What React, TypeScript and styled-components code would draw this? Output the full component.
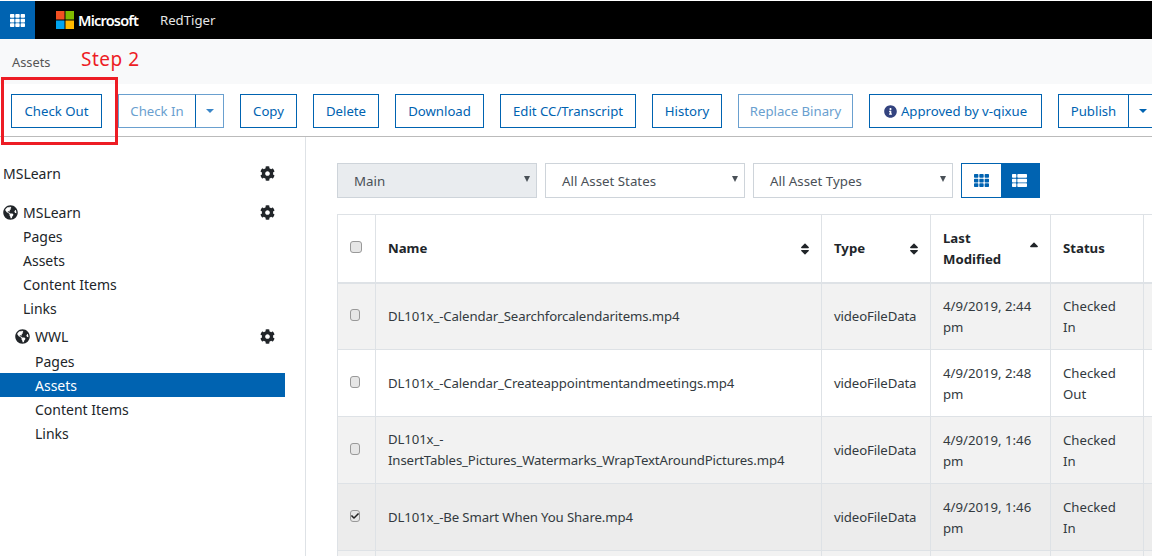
import * as React from "react";
import styled, { createGlobalStyle } from "styled-components";
import { FaCheck, FaCog, FaGlobeAmericas, FaInfoCircle, FaSort, FaSortUp, FaTh, FaThList } from "react-icons/fa";

const Global = createGlobalStyle`
  html, body {
    margin: 0;
    width: 1152px;
    height: 556px;
    overflow: hidden;
    background: #fff;
  }
  body {
    font-family: "Noto Sans", "Open Sans", sans-serif;
    font-size: 14px;
    color: #212529;
  }
  * { box-sizing: border-box; }
`;

const blue = "#0063b1";

const Page = styled.div`
  position: relative;
  width: 1152px;
  height: 556px;
  overflow: hidden;
  display: flex;
  flex-direction: column;
`;

const TopBar = styled.div`
  flex: 0 0 38px;
  margin-top: 1px;
  background: #000;
  display: flex;
  align-items: center;
`;

const AppTile = styled.div`
  width: 35px;
  height: 100%;
  background: ${blue};
  color: #fff;
  display: flex;
  align-items: center;
  justify-content: center;
  font-size: 15px;
`;

const Logo = styled.svg`
  margin-left: 21px;
  width: 18px;
  height: 18px;
`;

const Brand = styled.span`
  margin-left: 4px;
  color: #fff;
  font-size: 14.5px;
  font-weight: 600;
  letter-spacing: -0.8px;
`;

const Product = styled.span`
  margin-left: 22px;
  color: #e6e6e6;
  font-size: 13.2px;
`;

const Crumbs = styled.div`
  flex: 0 0 45px;
  background: #f8f9fa;
  padding: 14px 0 0 12px;
  font-size: 12.8px;
  color: #555;
`;

const Toolbar = styled.div`
  flex: 0 0 53px;
  border-bottom: 1px solid #bbb;
  padding: 10px 0 0 11px;
  display: flex;
  gap: 16px;
`;

const Btn = styled.div<{ $w: number; $off?: boolean }>`
  flex: 0 0 ${(p) => p.$w}px;
  height: 34px;
  border: 1px solid ${(p) => (p.$off ? "#6aa0cf" : blue)};
  color: ${(p) => (p.$off ? "#6aa0cf" : blue)};
  display: flex;
  align-items: center;
  justify-content: center;
  gap: 4px;
  font-size: 13.2px;
  white-space: nowrap;
`;

const InfoIcon = styled(FaInfoCircle)`
  color: #33437f;
  font-size: 13px;
`;

const Split = styled.div`
  display: flex;
`;

const Caret = styled.div<{ $w: number; $off?: boolean }>`
  flex: 0 0 ${(p) => p.$w}px;
  width: ${(p) => p.$w}px;
  height: 34px;
  border: 1px solid ${(p) => (p.$off ? "#6aa0cf" : blue)};
  border-left-color: ${blue};
  margin-left: -1px;
  display: flex;
  align-items: center;
  justify-content: center;
  &::after {
    content: "";
    border-left: 4px solid transparent;
    border-right: 4px solid transparent;
    border-top: 4px solid ${(p) => (p.$off ? "#3a86c8" : blue)};
    margin-top: -1px;
  }
`;

const Body = styled.div`
  flex: 1;
  display: flex;
  min-height: 0;
`;

const Sidebar = styled.div`
  flex: 0 0 306px;
  border-right: 1px solid #dee2e6;
  padding: 24px 20px 0 0;
`;

const Row = styled.div<{ $indent: number; $h?: number; $active?: boolean }>`
  height: ${(p) => p.$h ?? 24}px;
  padding-left: ${(p) => p.$indent}px;
  display: flex;
  align-items: center;
  gap: 5px;
  font-size: 14px;
  background: ${(p) => (p.$active ? blue : "transparent")};
  color: ${(p) => (p.$active ? "#fff" : "#212529")};
`;

const SubHead = styled(Row)`
  padding-top: 3px;
`;

const Gear = styled(FaCog)`
  margin-left: auto;
  margin-right: 10px;
  font-size: 15px;
`;

const Globe = styled(FaGlobeAmericas)`
  font-size: 15px;
`;

const Main = styled.div`
  flex: 1;
  padding: 26px 0 0 31px;
  min-width: 0;
`;

const Filters = styled.div`
  display: flex;
  gap: 8px;
  height: 35px;
`;

const Select = styled.div<{ $off?: boolean }>`
  width: 200px;
  border: 1px solid #ced4da;
  background: ${(p) => (p.$off ? "#e9ecef" : "#fff")};
  color: #495057;
  font-size: 13.3px;
  padding: 0 6px 0 16px;
  display: flex;
  align-items: center;
  justify-content: space-between;
  &::after {
    content: "";
    border-left: 3.5px solid transparent;
    border-right: 3.5px solid transparent;
    border-top: 6px solid #495057;
    margin-top: -4px;
  }
`;

const Toggle = styled.div`
  display: flex;
  width: 79px;
  border: 1px solid ${blue};
`;

const ToggleCell = styled.div<{ $on?: boolean }>`
  flex: 1;
  background: ${(p) => (p.$on ? blue : "#fff")};
  color: ${(p) => (p.$on ? "#fff" : blue)};
  display: flex;
  align-items: center;
  justify-content: center;
  font-size: 15px;
`;

const Table = styled.table`
  margin-top: 16px;
  width: 860px;
  table-layout: fixed;
  border-collapse: collapse;
`;

const Th = styled.th`
  height: 68px;
  border: 1px solid #dee2e6;
  border-bottom-width: 2px;
  padding: 1px 10px 0 12px;
  text-align: left;
  font-size: 13.2px;
  font-weight: 700;
  line-height: 21px;
`;

const ThInner = styled.div`
  display: flex;
  align-items: center;
  justify-content: space-between;
`;

const SortIcon = styled.span<{ $up?: boolean }>`
  font-size: 14px;
  display: flex;
  margin-right: -1px;
  margin-top: ${(p) => (p.$up ? "-2px" : "0")};
`;

const Tr = styled.tr<{ $bg: string }>`
  background: ${(p) => p.$bg};
`;

const Td = styled.td`
  height: 67px;
  border: 1px solid #dee2e6;
  padding: 2px 12px 0;
  font-size: 13.2px;
  line-height: 21px;
  color: #333a40;
`;

const NameCell = styled(Td)`
  padding-top: 0;
  letter-spacing: -0.12px;
`;

const CheckCell = styled.div`
  display: flex;
  justify-content: center;
  margin-top: -4px;
  padding-right: 3px;
`;

const Box = styled.span`
  width: 12px;
  height: 12px;
  border: 1px solid #999;
  border-radius: 3px;
  background: #e6e6e6;
  color: #222;
  font-size: 8px;
  display: flex;
  align-items: center;
  justify-content: center;
`;

const Annotation = styled.div`
  position: absolute;
  left: 1px;
  top: 77px;
  width: 117px;
  height: 68px;
  border: 3px solid #ed1c24;
`;

const StepLabel = styled.div`
  position: absolute;
  left: 81px;
  top: 46px;
  color: #ed1c24;
  font-size: 19px;
  letter-spacing: 0.5px;
`;

const rows = [
  { name: "DL101x_-Calendar_Searchforcalendaritems.mp4", date: "4/9/2019, 2:44 pm", status: "Checked In", bg: "#f2f2f2" },
  { name: "DL101x_-Calendar_Createappointmentandmeetings.mp4", date: "4/9/2019, 2:48 pm", status: "Checked Out", bg: "#fff" },
  { name: "DL101x_-InsertTables_Pictures_Watermarks_WrapTextAroundPictures.mp4", date: "4/9/2019, 1:46 pm", status: "Checked In", bg: "#f2f2f2" },
  { name: "DL101x_-Be Smart When You Share.mp4", date: "4/9/2019, 1:46 pm", status: "Checked In", bg: "#ececec", checked: true },
  { name: "", date: "", status: "", bg: "#f2f2f2" },
];

export default function App() {
  return (
    <Page>
      <Global />
      <TopBar>
        <AppTile><FaTh /></AppTile>
        <Logo viewBox="0 0 18 18">
          <rect width="8.5" height="8.5" fill="#f25022" />
          <rect x="9.5" width="8.5" height="8.5" fill="#7fba00" />
          <rect y="9.5" width="8.5" height="8.5" fill="#00a4ef" />
          <rect x="9.5" y="9.5" width="8.5" height="8.5" fill="#ffb900" />
        </Logo>
        <Brand>Microsoft</Brand>
        <Product>RedTiger</Product>
      </TopBar>
      <Crumbs>Assets</Crumbs>
      <Toolbar>
        <Btn $w={91}>Check Out</Btn>
        <Split>
          <Btn $w={78} $off>Check In</Btn>
          <Caret $w={29} $off />
        </Split>
        <Btn $w={57}>Copy</Btn>
        <Btn $w={66}>Delete</Btn>
        <Btn $w={89}>Download</Btn>
        <Btn $w={136}>Edit CC/Transcript</Btn>
        <Btn $w={70}>History</Btn>
        <Btn $w={115} $off>Replace Binary</Btn>
        <Btn $w={173}><InfoIcon />Approved by v-qixue</Btn>
        <Split>
          <Btn $w={71}>Publish</Btn>
          <Caret $w={30} />
        </Split>
      </Toolbar>
      <Body>
        <Sidebar>
          <Row $indent={3}>MSLearn<Gear /></Row>
          <Row $indent={3} $h={15} />
          <Row $indent={3}><Globe />MSLearn<Gear /></Row>
          <Row $indent={23}>Pages</Row>
          <Row $indent={23}>Assets</Row>
          <Row $indent={23}>Content Items</Row>
          <Row $indent={23}>Links</Row>
          <SubHead $indent={15} $h={29}><Globe />WWL<Gear /></SubHead>
          <Row $indent={35}>Pages</Row>
          <Row $indent={35} $active>Assets</Row>
          <Row $indent={35}>Content Items</Row>
          <Row $indent={35}>Links</Row>
        </Sidebar>
        <Main>
          <Filters>
            <Select $off>Main</Select>
            <Select>All Asset States</Select>
            <Select>All Asset Types</Select>
            <Toggle>
              <ToggleCell><FaTh /></ToggleCell>
              <ToggleCell $on><FaThList /></ToggleCell>
            </Toggle>
          </Filters>
          <Table>
            <colgroup>
              <col width="38" />
              <col width="446" />
              <col width="109" />
              <col width="120" />
              <col width="93" />
              <col width="54" />
            </colgroup>
            <thead>
              <tr>
                <Th><CheckCell><Box /></CheckCell></Th>
                <Th><ThInner>Name<SortIcon><FaSort /></SortIcon></ThInner></Th>
                <Th><ThInner>Type<SortIcon><FaSort /></SortIcon></ThInner></Th>
                <Th><ThInner><span>Last<br />Modified</span><SortIcon $up><FaSortUp /></SortIcon></ThInner></Th>
                <Th>Status</Th>
                <Th />
              </tr>
            </thead>
            <tbody>
              {rows.map((r, i) => (
                <Tr key={i} $bg={r.bg}>
                  <Td><CheckCell><Box>{r.checked && <FaCheck />}</Box></CheckCell></Td>
                  <NameCell>{r.name}</NameCell>
                  <NameCell>{r.name && "videoFileData"}</NameCell>
                  <Td>{r.date}</Td>
                  <Td>{r.status}</Td>
                  <Td />
                </Tr>
              ))}
            </tbody>
          </Table>
        </Main>
      </Body>
      <Annotation />
      <StepLabel>Step 2</StepLabel>
    </Page>
  );
}
